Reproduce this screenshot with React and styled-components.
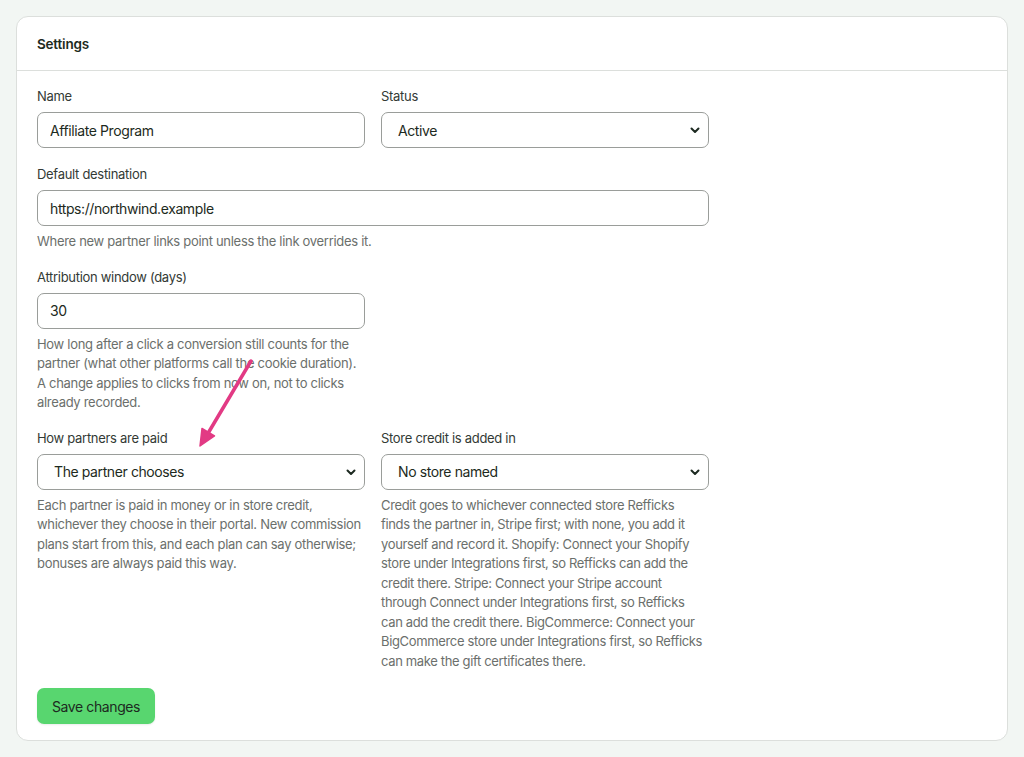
import React from "react";
import styled, { createGlobalStyle } from "styled-components";

const TEXT = "#1d2a21";
const MUTED = "#6b6f6c";
const BORDER = "#dcdfdc";

const GlobalStyle = createGlobalStyle`
  html, body {
    margin: 0;
    padding: 0;
    background: #f2f6f3;
    font-family: Inter, "Noto Sans", sans-serif;
    color: ${TEXT};
  }
  * { box-sizing: border-box; }
`;

const Page = styled.div`
  position: relative;
  padding: 16px;
  min-height: 757px;
`;

const Card = styled.section`
  background: #fff;
  border: 1px solid ${BORDER};
  border-radius: 12px;
`;

const CardHeader = styled.header`
  padding: 18px 20px 17px;
  border-bottom: 1px solid ${BORDER};
  font-size: 13.5px;
  line-height: 18px;
  font-weight: 600;
  letter-spacing: -0.2px;
`;

const CardBody = styled.div`
  padding: 16px 20px 16px;
  display: flex;
  flex-direction: column;
  gap: 16px;
`;

const Row = styled.div`
  display: grid;
  grid-template-columns: ${(p) => (p.$single ? "672px" : "328px 328px")};
  column-gap: 16px;
  align-items: start;
  margin-bottom: ${(p) => (p.$first ? "1px" : "0")};
`;

const Field = styled.div`
  display: flex;
  flex-direction: column;
`;

const Label = styled.label`
  font-size: 13px;
  line-height: 18px;
  color: #333a35;
  letter-spacing: -0.3px;
  margin-bottom: 7px;
`;

const Input = styled.input`
  height: 36px;
  width: 100%;
  border: 1px solid #9a9d9a;
  border-radius: 7px;
  padding: 0 12px;
  font: inherit;
  font-size: 14px;
  letter-spacing: -0.4px;
  color: ${TEXT};
  background: #fff;
  outline: none;
`;

const SelectWrap = styled.div`
  position: relative;
`;

const Select = styled.select`
  appearance: none;
  -webkit-appearance: none;
  height: 36px;
  width: 100%;
  border: 1px solid #9a9d9a;
  border-radius: 7px;
  padding: 0 30px 0 16px;
  font: inherit;
  font-size: 14px;
  letter-spacing: -0.4px;
  color: ${TEXT};
  background: #fff;
  outline: none;
`;

const Chevron = styled.svg`
  position: absolute;
  right: 9px;
  top: 50%;
  margin-top: -3px;
  pointer-events: none;
`;

const Hint = styled.p`
  margin: 6px 0 0;
  font-size: 13px;
  line-height: 19.5px;
  letter-spacing: -0.3px;
  color: ${MUTED};
`;

const HintLine = styled.span`
  display: block;
  white-space: nowrap;
  letter-spacing: -0.35px;
`;

const Button = styled.button`
  align-self: flex-start;
  height: 36px;
  margin-top: 1px;
  padding: 0 15px;
  border: none;
  border-radius: 7px;
  background: #58d66f;
  color: ${TEXT};
  font: inherit;
  font-size: 14px;
  letter-spacing: -0.4px;
  box-shadow: 0 1px 2px rgba(0, 0, 0, 0.08);
`;

const Overlay = styled.svg`
  position: absolute;
  left: 0;
  top: 0;
  pointer-events: none;
`;

const STORE_HINT = [
  "Credit goes to whichever connected store Refficks",
  "finds the partner in, Stripe first; with none, you add it",
  "yourself and record it. Shopify: Connect your Shopify",
  "store under Integrations first, so Refficks can add the",
  "credit there. Stripe: Connect your Stripe account",
  "through Connect under Integrations first, so Refficks",
  "can add the credit there. BigCommerce: Connect your",
  "BigCommerce store under Integrations first, so Refficks",
  "can make the gift certificates there.",
];

function DropDown({ value }) {
  return (
    <SelectWrap>
      <Select defaultValue={value}>
        <option>{value}</option>
      </Select>
      <Chevron width="10" height="7" viewBox="0 0 10 7">
        <path d="M1.5 1.5 L5 5 L8.5 1.5" fill="none" stroke="#1d2a21" strokeWidth="2" strokeLinecap="round" strokeLinejoin="round" />
      </Chevron>
    </SelectWrap>
  );
}

export default function App() {
  return (
    <>
      <GlobalStyle />
      <Page>
        <Card>
          <CardHeader>Settings</CardHeader>
          <CardBody>
            <Row $first>
              <Field>
                <Label>Name</Label>
                <Input defaultValue="Affiliate Program" />
              </Field>
              <Field>
                <Label>Status</Label>
                <DropDown value="Active" />
              </Field>
            </Row>
            <Row $single>
              <Field>
                <Label>Default destination</Label>
                <Input defaultValue="https://northwind.example" />
                <Hint>Where new partner links point unless the link overrides it.</Hint>
              </Field>
            </Row>
            <Row>
              <Field>
                <Label>Attribution window (days)</Label>
                <Input defaultValue="30" />
                <Hint>
                  How long after a click a conversion still counts for the partner (what other platforms
                  call the cookie duration). A change applies to clicks from now on, not to clicks already
                  recorded.
                </Hint>
              </Field>
            </Row>
            <Row>
              <Field>
                <Label>How partners are paid</Label>
                <DropDown value="The partner chooses" />
                <Hint>
                  Each partner is paid in money or in store credit, whichever they choose in their portal.
                  New commission plans start from this, and each plan can say otherwise; bonuses are always
                  paid this way.
                </Hint>
              </Field>
              <Field>
                <Label>Store credit is added in</Label>
                <DropDown value="No store named" />
                <Hint>
                  {STORE_HINT.map((line, i) => (
                    <HintLine key={i}>{line}</HintLine>
                  ))}
                </Hint>
              </Field>
            </Row>
            <Button>Save changes</Button>
          </CardBody>
        </Card>
        <Overlay width="1024" height="757" viewBox="0 0 1024 757">
          <line x1="251" y1="361" x2="207" y2="435" stroke="#e23a84" strokeWidth="3.5" strokeLinecap="round" />
          <polygon points="200,446 214.5,436 202,428.5" fill="#e23a84" stroke="#e23a84" strokeWidth="1.5" strokeLinejoin="round" />
        </Overlay>
      </Page>
    </>
  );
}
